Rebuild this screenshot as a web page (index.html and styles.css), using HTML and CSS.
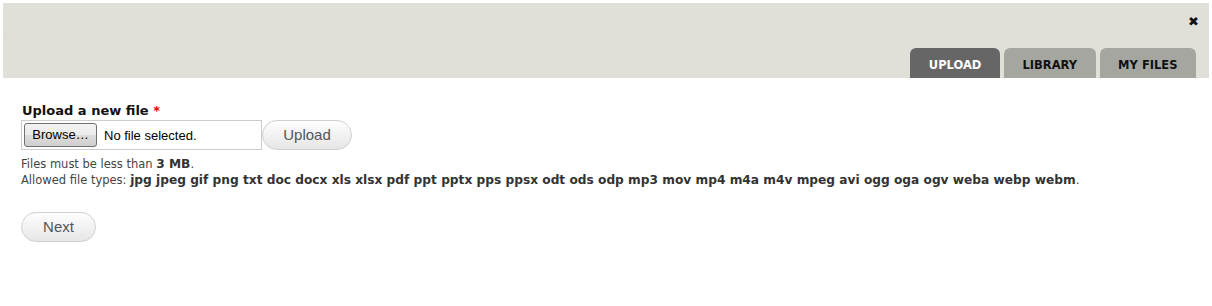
FILE: index.html
```html
<!DOCTYPE html>
<html>
<head>
<meta charset="utf-8">
<link rel="stylesheet" href="styles.css">
</head>
<body>
<div class="header">
  <div class="header-top">
    <span class="close">✖</span>
  </div>
  <div class="tabs">
    <span class="tab active">UPLOAD</span>
    <span class="tab">LIBRARY</span>
    <span class="tab">MY FILES</span>
  </div>
</div>
<div class="content">
  <div class="label">Upload a new file <span class="req">*</span></div>
  <div class="upload-row">
    <div class="file-input">
      <span class="browse">Browse…</span>
      <span class="nofile">No file selected.</span>
    </div>
    <span class="btn upload-btn">Upload</span>
  </div>
  <div class="desc">
    <div>Files must be less than <strong>3 MB</strong>.</div>
    <div>Allowed file types: <strong>jpg jpeg gif png txt doc docx xls xlsx pdf ppt pptx pps ppsx odt ods odp mp3 mov mp4 m4a m4v mpeg avi ogg oga ogv weba webp webm</strong>.</div>
  </div>
  <div class="actions">
    <span class="btn next-btn">Next</span>
  </div>
</div>
</body>
</html>
```

FILE: styles.css
```css
html, body {
  margin: 0;
  padding: 0;
  background: #fff;
  font-family: Verdana, "DejaVu Sans", sans-serif;
}
.header {
  margin: 3px 3px 0 3px;
  height: 75px;
  background: #e1e0d8;
  display: flex;
  flex-direction: column;
}
.header-top {
  height: 33px;
  display: flex;
  justify-content: flex-end;
  align-items: flex-end;
  padding-right: 10px;
  border-bottom: 1px solid #dedcd3;
}
.close {
  font-size: 13px;
  color: #111;
  line-height: 13px;
  margin-bottom: 8px;
}
.tabs {
  margin-top: auto;
  display: flex;
  justify-content: flex-end;
  gap: 4px;
  padding-right: 13px;
}
.tab {
  height: 30px;
  line-height: 35px;
  background: #a6a6a0;
  color: #111;
  font-weight: bold;
  font-size: 11.5px;
  border-radius: 6px 6px 0 0;
  text-align: center;
  padding: 0 18.5px;
  box-sizing: border-box;
}
.tab.active {
  background: #666;
  color: #fff;
}
.content {
  padding: 25px 21px 0 21px;
}
.label {
  font-weight: bold;
  font-size: 13px;
  color: #111;
  line-height: 16px;
  margin-left: 1px;
}
.req {
  color: #e00;
}
.upload-row {
  display: flex;
  align-items: center;
  margin-top: 1px;
}
.file-input {
  width: 241px;
  height: 30px;
  box-sizing: border-box;
  border: 1px solid #ccc;
  display: flex;
  align-items: center;
  padding-left: 2px;
  font-family: "Liberation Sans", Arial, sans-serif;
  font-size: 13px;
  color: #000;
}
.browse {
  width: 73px;
  height: 24px;
  box-sizing: border-box;
  border: 1px solid #707070;
  border-radius: 3px;
  background: linear-gradient(#f2f2f2, #ebebeb 50%, #dddddd 50%, #cfcfcf);
  text-align: center;
  line-height: 22px;
}
.nofile {
  margin-left: 7px;
}
.btn {
  display: inline-block;
  box-sizing: border-box;
  border: 1px solid #d0d0d0;
  border-radius: 15px;
  background: linear-gradient(#fefefe, #e6e6e6);
  font-family: "Liberation Sans", Arial, sans-serif;
  font-size: 15px;
  color: #555;
  text-align: center;
}
.upload-btn {
  width: 90px;
  height: 30px;
  line-height: 28px;
}
.desc {
  margin-top: 6px;
  font-size: 11.5px;
  line-height: 16px;
  color: #444;
}
.desc strong {
  font-size: 12.2px;
  color: #333;
}
.actions {
  margin-top: 24px;
  display: flex;
}
.next-btn {
  width: 75px;
  height: 30px;
  line-height: 28px;
}
```
